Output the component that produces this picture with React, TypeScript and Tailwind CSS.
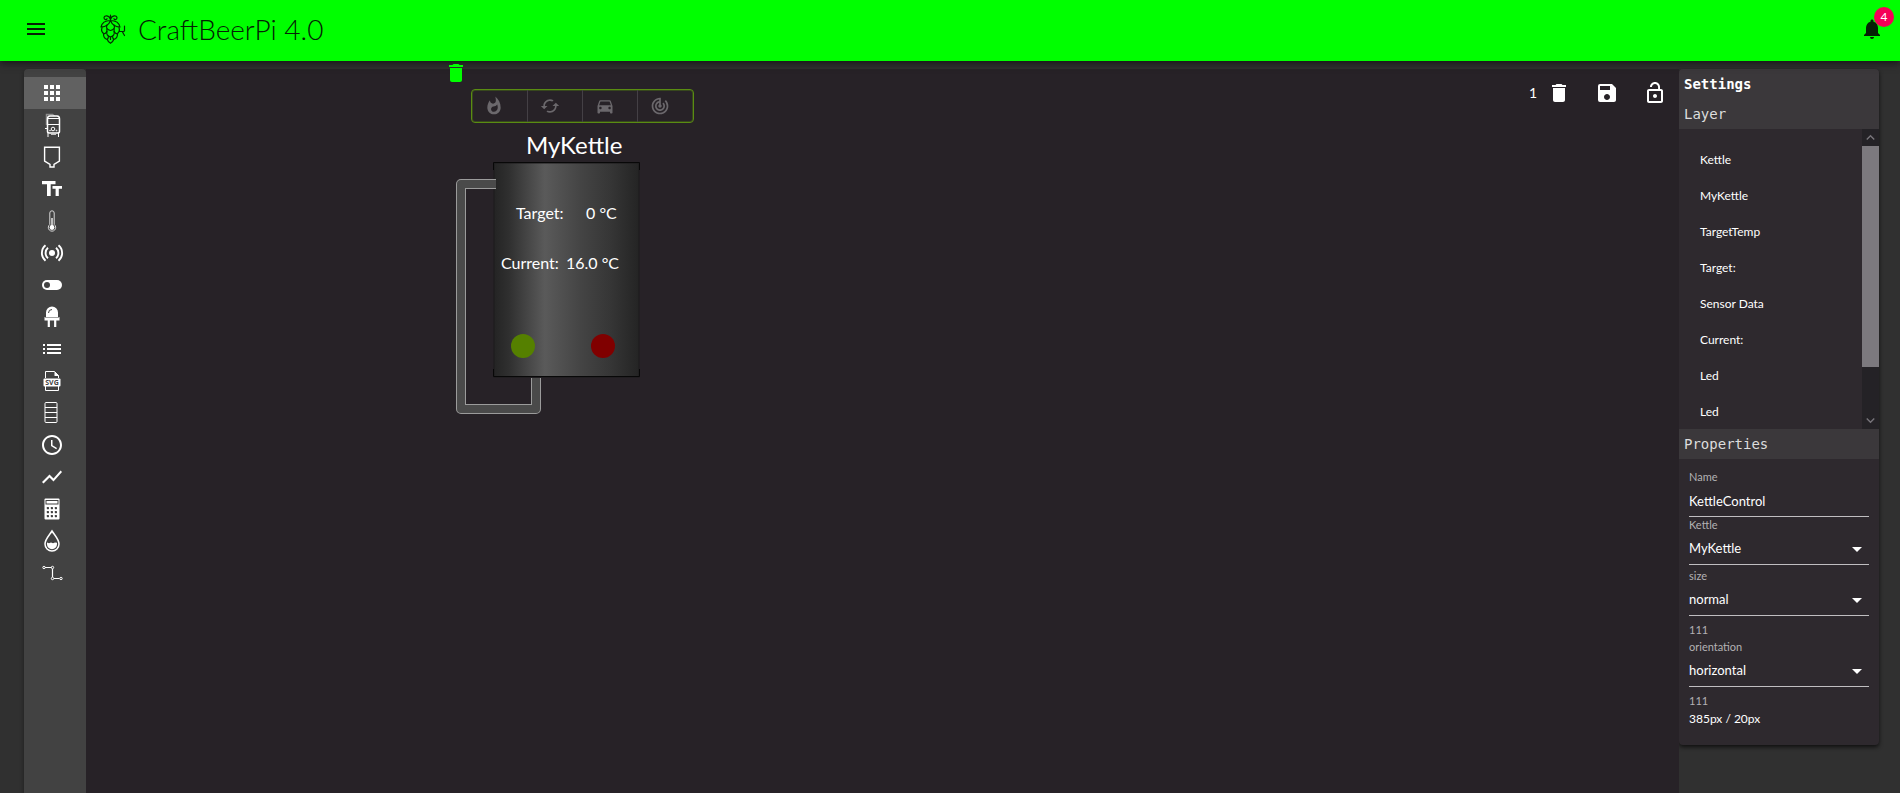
import React from "react";
import {
  MdApps, MdMenu, MdNotifications, MdDelete, MdSave, MdLockOpen, MdList,
  MdAccessTime, MdShowChart, MdWhatshot, MdCached, MdDirectionsCar, MdTrackChanges,
  MdArrowDropDown, MdKeyboardArrowUp, MdKeyboardArrowDown,
} from "react-icons/md";

const HopLogo = () => (
  <svg viewBox="0 0 26 30" className="h-[30px] w-[26px]" fill="none" stroke="#042b04" strokeWidth="1.2" strokeLinecap="round" strokeLinejoin="round">
    <path d="M10.500 6V1M10.500 5.500C9.500 1 4 .8 4 3.800c0 2 2.800 2.400 3 .8M10.500 5.500c1-4.500 6.500-4.700 6.500-1.700 0 2-2.800 2.400-3 .8" />
    <path d="M10.500 6.500C6 6.500 2 8 1 13c3.500 0 8-2 9.500-6.500zM10.500 6.500c4.500 0 8.500 1.500 9.500 6.500-3.500 0-8-2-9.500-6.500z" />
    <path d="M7 11c-1.500 3 .5 5 3.500 5.500 3-.5 5-2.500 3.500-5.500" />
    <path d="M2 13.500c-1 3 0 5.500 2.500 6.300 2-1 2.800-2.800 2.300-5M19 13.500c1 3 0 5.500-2.500 6.300-2-1-2.800-2.800-2.300-5" />
    <path d="M7 17.500c-1 2.500.5 4.500 3.500 5.500 3-1 4.500-3 3.500-5.500M3.500 20c0 3 1.500 5 3.800 5.500 1-1 1.300-2 1-3.500M17.500 20c0 3-1.500 5-3.800 5.500-1-1-1.300-2-1-3.500" />
    <path d="M7.300 25.500c.5 1.500 1.700 3 3.200 3.800 1.500-.8 2.700-2.300 3.200-3.800M10.500 23v2.500" />
    <path d="M19.500 17.500h4M24.500 12v5l-2 1 2 3.500" />
  </svg>
);

const KettleIcon = () => (
  <svg viewBox="0 0 24 24" className="h-6 w-6" fill="none" stroke="white">
    <path d="M6.500 12V1.500h6l2 1.500" strokeWidth="1.500" opacity=".4" />
    <path d="M7.500 18.500V6c0-1.500 1-3 2.500-3h7c1.500 0 2.500 1.500 2.500 3v12.500c0 1-1 1.500-2 1.500H9.500c-1 0-2-.5-2-1.500z" strokeWidth="1.500" />
    <path d="M8 5.500h11M7 11.500h12.500M5 15.500h2M8 20v4M18.500 20v4" strokeWidth="1" />
    <path d="M11 21.500h5" strokeWidth="1" opacity=".7" />
    <circle cx="13" cy="16" r="1.800" strokeWidth="1" />
    <circle cx="10" cy="17.500" r=".4" />
    <circle cx="16.500" cy="17.500" r=".4" />
  </svg>
);
const TankIcon = () => (
  <svg viewBox="0 0 24 24" className="h-6 w-6" fill="none" stroke="white" strokeWidth="1.400">
    <path d="M4.600 2.200h14.800v14l-5.400 3.300v2.500h-4v-2.500l-5.400-3.300z" />
  </svg>
);
const TextIcon = () => (
  <svg viewBox="0 0 24 24" className="h-6 w-6" fill="white">
    <path d="M2 4h13.500v3.200h-4.800V19H7V7.200H2zM12.500 9H22v2.800h-3.200V19h-3.200v-7.200h-3.100z" />
  </svg>
);
const ThermometerIcon = () => (
  <svg viewBox="0 0 24 24" className="h-6 w-6">
    <path d="M9.800 15.500V4a2.200 2.200 0 0 1 4.400 0v11.500a3.700 3.700 0 1 1-4.400 0z" fill="none" stroke="#d8d8d8" strokeWidth="1" />
    <path d="M11 9h2v8h-2z" fill="#bdbdbd" />
    <circle cx="12" cy="18.500" r="2.400" fill="white" />
  </svg>
);
const SensorIcon = () => (
  <svg viewBox="0 0 24 24" className="h-6 w-6 overflow-visible" fill="none" stroke="white" strokeWidth="1.900">
    <circle cx="12" cy="12" r="3" fill="white" stroke="none" />
    <path d="M8 6.800a6.800 6.800 0 0 0 0 10.400M16 6.800a6.800 6.800 0 0 1 0 10.400M5.500 4.300a10 10 0 0 0 0 15.400M18.500 4.300a10 10 0 0 1 0 15.400" />
  </svg>
);
const ToggleIcon = () => (
  <svg viewBox="0 0 24 24" className="h-6 w-6">
    <rect x="2" y="7" width="20" height="10" rx="5" fill="white" />
    <circle cx="7" cy="12" r="3" fill="#424242" />
  </svg>
);
const LedIcon = () => (
  <svg viewBox="0 0 24 24" className="h-6 w-6">
    <path d="M6 12V7.500a6 6 0 0 1 12 0V12h1.500v3.500h-15V12z" fill="white" />
    <path d="M8.500 8a3.500 3.500 0 0 1 3.500-3.500" fill="none" stroke="#424242" />
    <path d="M4.500 12.500h15" stroke="#8a8a8a" strokeWidth=".8" />
    <path d="M8.800 15v7M15.200 15v7" stroke="white" strokeWidth="2.200" />
  </svg>
);
const SvgFileIcon = () => (
  <svg viewBox="0 0 24 24" className="h-6 w-6">
    <path d="M5.500 9V2.500h9l4 4V9M5.500 17v4.500h13V17" fill="none" stroke="white" />
    <path d="M14.500 2.500v4.500h4.500z" fill="white" />
    <rect x="3.500" y="9.500" width="17" height="8" rx="1" fill="white" />
    <text x="12" y="16" textAnchor="middle" fontFamily="Open Sans, sans-serif" fontSize="7" fontWeight="700" fill="#424242">SVG</text>
  </svg>
);
const StackIcon = () => (
  <svg viewBox="0 0 24 24" className="h-6 w-6" fill="none" stroke="white">
    <rect x="5" y="1.500" width="12" height="20" rx="1" />
    <path d="M5 6.500h12M5 11.500h12M5 16.500h12" />
  </svg>
);
const CalculatorIcon = () => (
  <svg viewBox="0 0 24 24" className="h-6 w-6">
    <rect x="4.500" y="1.500" width="15" height="21" rx="1" fill="white" />
    <rect x="6" y="3.500" width="12" height="3.500" fill="white" stroke="#424242" strokeWidth="1" />
    <g fill="#424242">
      {[10, 14, 18].map((y) => [6.8, 10.8, 14.8].map((x) => <rect key={`${x}-${y}`} x={x} y={y} width="2.200" height="2.200" rx=".6" />))}
    </g>
  </svg>
);
const DropIcon = () => (
  <svg viewBox="0 0 24 24" className="h-6 w-6">
    <path d="M12 2c2.500 4 7 8.500 7 13a7 7 0 0 1-14 0c0-4.500 4.500-9 7-13z" fill="none" stroke="white" strokeWidth="1.500" />
    <path d="M7 13.500l2 .8 2-.8 2 .8 2-.8 2 .3v1.500a5 5 0 0 1-10 0z" fill="white" />
  </svg>
);
const PathIcon = () => (
  <svg viewBox="0 0 24 24" className="h-6 w-6" fill="none" stroke="white">
    <path d="M5 6.500h6.500M12.500 8v8M14 17.500h5.500" strokeWidth="1.200" />
    <circle cx="4" cy="6.500" r="1.200" />
    <circle cx="12.500" cy="6.500" r="1.200" />
    <circle cx="12.500" cy="17.500" r="1.200" />
    <circle cx="21" cy="17.500" r="1.200" />
  </svg>
);

const tools: { name: string; icon: React.ReactNode }[] = [
  { name: "Grid", icon: <MdApps size={24} /> },
  { name: "Kettle", icon: <KettleIcon /> },
  { name: "Fermenter", icon: <TankIcon /> },
  { name: "Text", icon: <TextIcon /> },
  { name: "Target temperature", icon: <ThermometerIcon /> },
  { name: "Sensor", icon: <SensorIcon /> },
  { name: "Actor", icon: <ToggleIcon /> },
  { name: "Led", icon: <LedIcon /> },
  { name: "Steps", icon: <MdList size={24} /> },
  { name: "Custom SVG", icon: <SvgFileIcon /> },
  { name: "Group", icon: <StackIcon /> },
  { name: "Clock", icon: <MdAccessTime size={24} /> },
  { name: "Chart", icon: <MdShowChart size={24} /> },
  { name: "Calculator", icon: <CalculatorIcon /> },
  { name: "Volume", icon: <DropIcon /> },
  { name: "Path", icon: <PathIcon /> },
];

const layers = ["Kettle", "MyKettle", "TargetTemp", "Target:", "Sensor Data", "Current:", "Led", "Led"];

const labelClass = "block h-4 text-[11px] leading-4 text-[#b3b1b4]";

function SelectField({ id, label, value }: { id: string; label: string; value: string }) {
  return (
    <div>
      <label htmlFor={id} className={labelClass}>{label}</label>
      <div className="grid h-8 items-center border-b border-[#c0bec1]">
        <select id={id} defaultValue={value} className="col-start-1 row-start-1 h-full w-full appearance-none bg-transparent text-[13px] text-white outline-none">
          <option>{value}</option>
        </select>
        <MdArrowDropDown size={24} className="pointer-events-none col-start-1 row-start-1 justify-self-end text-white" />
      </div>
    </div>
  );
}

function Vessel() {
  return (
    <svg width="147" height="218" viewBox="0 0 147 218">
      <defs>
        <linearGradient id="steel">
          <stop offset="0" stopColor="#242424" />
          <stop offset=".1" stopColor="#2f2f2f" />
          <stop offset=".35" stopColor="#5a5a5a" />
          <stop offset=".6" stopColor="#444" />
          <stop offset=".8" stopColor="#363636" />
          <stop offset="1" stopColor="#242424" />
        </linearGradient>
      </defs>
      <rect x="1" y="2" width="145" height="214" fill="url(#steel)" stroke="#1c1b1d" />
      <path d="M.5 9V1.500h146V9M.5 208v7.500h146V208" fill="none" stroke="#080808" />
    </svg>
  );
}

export default function App() {
  return (
    <div className="flex h-screen flex-col overflow-hidden bg-[#303030] font-['Lato','Open_Sans',sans-serif] text-white">
      <header className="relative z-10 flex h-[61px] shrink-0 items-center bg-[#00ff00] pb-1 pl-6 pr-4 text-[#052105] shadow-[0_2px_4px_-1px_rgba(0,0,0,0.3),0_4px_8px_rgba(0,0,0,0.3)]">
        <button aria-label="Open menu"><MdMenu size={24} /></button>
        <div className="ml-[52px]"><HopLogo /></div>
        <h1 className="ml-3 flex-1 text-[28px] font-light leading-8">CraftBeerPi 4.0</h1>
        <button aria-label="Notifications" className="relative">
          <MdNotifications size={24} />
          <span className="absolute -right-2.5 -top-2.5 flex size-5 items-center justify-center rounded-full bg-[#f50057] text-xs text-white">4</span>
        </button>
      </header>

      <main className="flex min-h-0 flex-1 items-stretch pl-6 pr-[21px] pt-2">
        <nav className="w-[62px] shrink-0 rounded-t bg-[#424242] pt-2 shadow-[0_2px_4px_rgba(0,0,0,0.4)]">
          {tools.map((tool, i) => (
            <button key={tool.name} aria-label={tool.name} className={i === 0 ? "flex h-8 w-full items-center bg-[#616161] pl-4" : "flex h-8 w-full items-center pl-4"}>
              {tool.icon}
            </button>
          ))}
        </nav>

        <section className="relative min-w-0 flex-1 bg-[#272227]">
          <div className="flex items-center justify-end gap-6 pr-3 pt-3">
            <div className="flex items-center gap-2.5">
              <span className="text-sm leading-6">1</span>
              <button aria-label="Delete"><MdDelete size={24} /></button>
            </div>
            <button aria-label="Save"><MdSave size={24} /></button>
            <button aria-label="Unlock"><MdLockOpen size={24} /></button>
          </div>

          <button aria-label="Remove item" className="absolute -top-2 left-[358px] z-20 text-[#00ff00]"><MdDelete size={24} /></button>

          <div className="absolute left-[385px] top-5 flex h-[34px] w-[223px] divide-x divide-[#444045] rounded border border-[#5a8c12] text-[#6b686c] shadow-[inset_0_0_0_1px_rgba(85,139,11,0.35)]">
            <button aria-label="Heater" className="flex w-14 items-center pl-3"><MdWhatshot size={20} /></button>
            <button aria-label="Agitator" className="flex w-[55px] items-center pl-3"><MdCached size={20} /></button>
            <button aria-label="Automatic" className="flex w-[55px] items-center pl-3"><MdDirectionsCar size={20} /></button>
            <button aria-label="Target" className="flex flex-1 items-center pl-3"><MdTrackChanges size={20} /></button>
          </div>

          <div className="absolute left-[407px] top-[92px]"><Vessel /></div>
          <svg className="absolute left-[370px] top-[110px]" width="86" height="236" viewBox="0 0 86 236" fill="none" strokeLinejoin="round">
            <path d="M40 5H5V230H80V199" stroke="#9b9b9b" strokeWidth="10" />
            <path d="M40 5H5V230H80V199" stroke="#4a4a4a" strokeWidth="8" />
          </svg>
          <span className="absolute left-[440px] top-[60px] text-2xl leading-8">MyKettle</span>
          <span className="absolute left-[430px] top-[132px] text-base leading-6">Target:</span>
          <span className="absolute left-[500px] top-[132px] whitespace-pre text-base leading-6">0 °C</span>
          <span className="absolute left-[415px] top-[182px] text-base leading-6">Current:</span>
          <span className="absolute left-[480px] top-[182px] whitespace-pre text-base leading-6">16.0 °C</span>
          <span className="absolute left-[425px] top-[265px] size-6 rounded-full bg-[#558000]" />
          <span className="absolute left-[505px] top-[265px] size-6 rounded-full bg-[#800000]" />
        </section>

        <aside className="w-[200px] shrink-0 self-start overflow-hidden rounded bg-[#2e292e] shadow-[0_2px_4px_rgba(0,0,0,0.7)]">
          <div className="bg-[#3b383b] pl-[5px] font-['DejaVu_Sans_Mono',monospace] text-sm leading-[30px]">
            <h2 className="font-bold">Settings</h2>
            <h3 className="text-[#dddddd]">Layer</h3>
          </div>
          <div className="flex h-[300px] overflow-hidden">
            <ul className="flex-1 pt-[13px]">
              {layers.map((layer, i) => (
                <li key={i} className="h-9 pl-[21px] text-xs leading-9">{layer}</li>
              ))}
            </ul>
            <div className="flex w-[17px] flex-col bg-[#242226] text-[#77747a]">
              <MdKeyboardArrowUp size={17} />
              <div className="h-[221px] bg-[#7c797e]" />
              <div className="flex-1" />
              <MdKeyboardArrowDown size={17} />
            </div>
          </div>
          <h3 className="bg-[#3b383b] pl-[5px] font-['DejaVu_Sans_Mono',monospace] text-sm leading-[30px] text-[#dddddd]">Properties</h3>
          <form className="px-2.5 pb-4 pt-2.5">
            <label htmlFor="name" className={labelClass}>Name</label>
            <input id="name" defaultValue="KettleControl" className="block h-8 w-full border-b border-[#c0bec1] bg-transparent text-[13px] text-white outline-none" />
            <SelectField id="kettle" label="Kettle" value="MyKettle" />
            <div className="pt-[3px]"><SelectField id="size" label="size" value="normal" /></div>
            <p className="pt-1.5 text-[11px] leading-4 text-[#b3b1b4]">111</p>
            <div className="pt-px"><SelectField id="orientation" label="orientation" value="horizontal" /></div>
            <p className="pt-1.5 text-[11px] leading-4 text-[#b3b1b4]">111</p>
            <p className="text-xs leading-5">385px / 20px</p>
          </form>
        </aside>
      </main>
    </div>
  );
}
